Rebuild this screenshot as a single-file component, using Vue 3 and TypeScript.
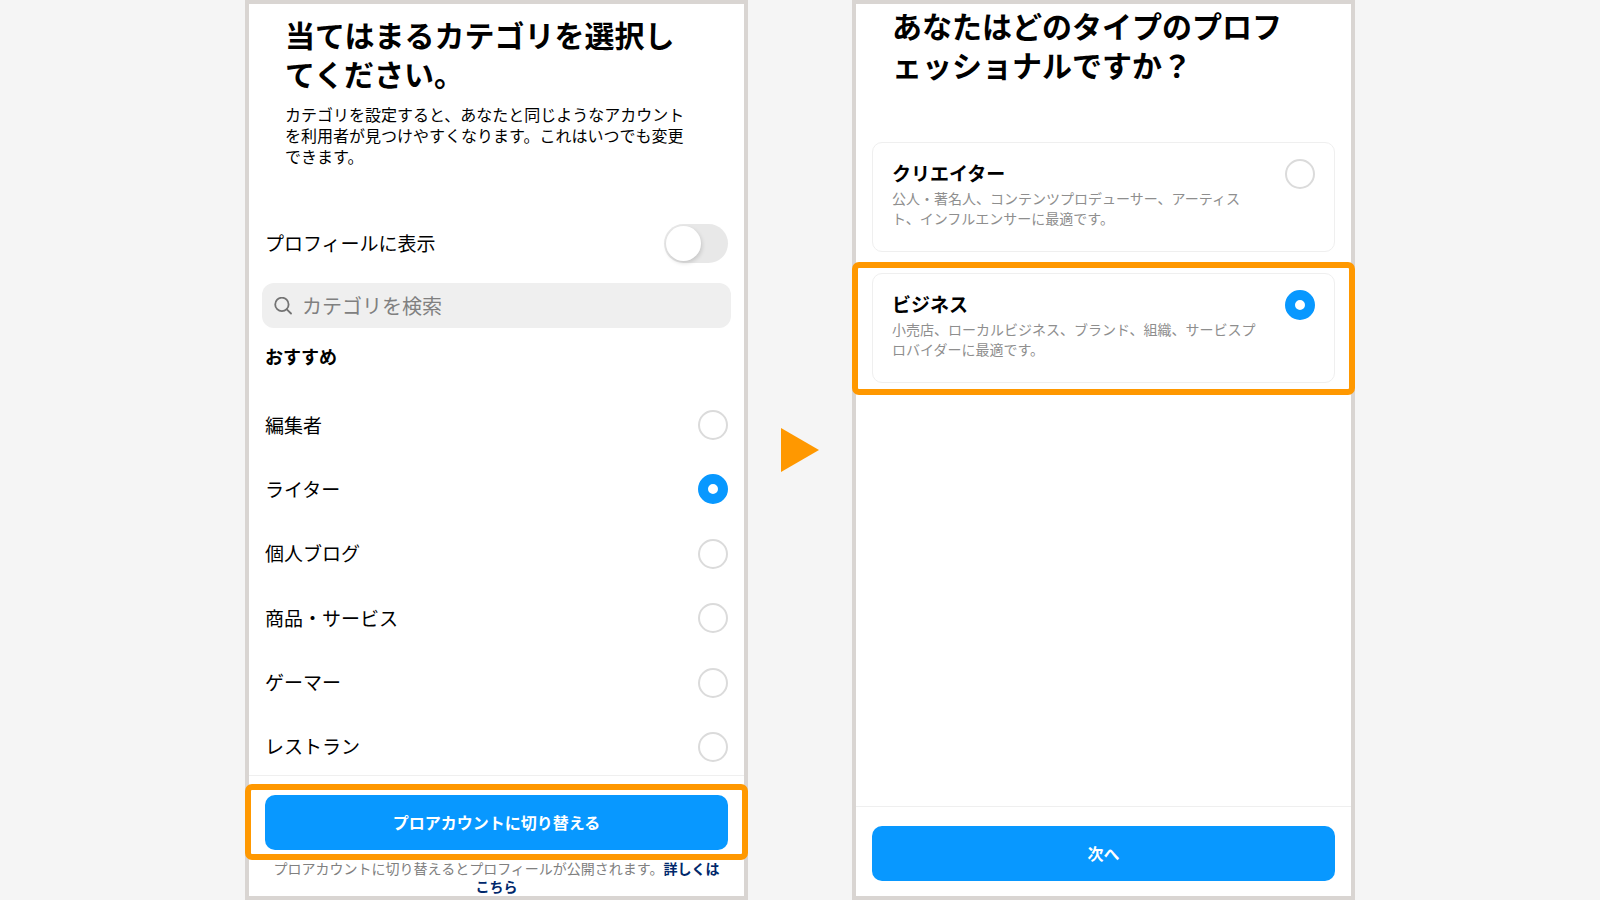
<script setup lang="ts">
import { ref } from 'vue'

interface AccountType {
  id: string
  title: string
  description: string
}

const categories: string[] = ['編集者', 'ライター', '個人ブログ', '商品・サービス', 'ゲーマー', 'レストラン']

const accountTypes: AccountType[] = [
  {
    id: 'creator',
    title: 'クリエイター',
    description: '公人・著名人、コンテンツプロデューサー、アーティスト、インフルエンサーに最適です。',
  },
  {
    id: 'business',
    title: 'ビジネス',
    description: '小売店、ローカルビジネス、ブランド、組織、サービスプロバイダーに最適です。',
  },
]

const showOnProfile = ref(false)
const query = ref('')
const category = ref('ライター')
const accountType = ref('business')
</script>

<template>
  <main class="stage" lang="ja">
    <section class="screen">
      <header class="intro intro-category">
        <h1>当てはまるカテゴリを選択してください。</h1>
        <p>カテゴリを設定すると、あなたと同じようなアカウントを利用者が見つけやすくなります。これはいつでも変更できます。</p>
      </header>

      <label class="row toggle-row">
        <span>プロフィールに表示</span>
        <input v-model="showOnProfile" class="switch" type="checkbox" role="switch" />
      </label>

      <div class="search">
        <svg viewBox="0 0 18 18" aria-hidden="true">
          <circle cx="7.9" cy="7.4" r="6.7" />
          <path d="M12.8 12.3 L17 16.5" />
        </svg>
        <input v-model="query" type="search" placeholder="カテゴリを検索" aria-label="カテゴリを検索" />
      </div>

      <h2 id="suggested">おすすめ</h2>
      <div class="categories" role="radiogroup" aria-labelledby="suggested">
        <label v-for="name in categories" :key="name" class="row">
          <span>{{ name }}</span>
          <input v-model="category" class="radio" type="radio" name="category" :value="name" />
        </label>
      </div>

      <footer class="actions actions-switch">
        <div class="highlight">
          <button class="primary" type="button">プロアカウントに切り替える</button>
        </div>
        <p>プロアカウントに切り替えるとプロフィールが公開されます。<a href="#">詳しくはこちら</a></p>
      </footer>
    </section>

    <svg class="arrow" viewBox="0 0 38 44" aria-hidden="true"><path d="M0 0 L38 22 L0 44 Z" /></svg>

    <section class="screen">
      <header class="intro intro-type">
        <h1 id="type-heading">あなたはどのタイプのプロフェッショナルですか？</h1>
      </header>

      <div class="cards" role="radiogroup" aria-labelledby="type-heading">
        <div v-for="type in accountTypes" :key="type.id" :class="{ highlight: accountType === type.id }">
          <label class="card">
            <span class="card-text">
              <strong>{{ type.title }}</strong>
              <span>{{ type.description }}</span>
            </span>
            <input v-model="accountType" class="radio" type="radio" name="account-type" :value="type.id" />
          </label>
        </div>
      </div>

      <footer class="actions actions-next">
        <button class="primary" type="button">次へ</button>
      </footer>
    </section>
  </main>
</template>

<style>
body {
  margin: 0;
  background: #f5f5f5;
}
</style>

<style scoped>
* {
  box-sizing: border-box;
}

.stage {
  display: grid;
  grid-template-columns: minmax(0, 1fr) 104px minmax(0, 1fr);
  max-width: 1110px;
  min-height: 100vh;
  margin: 0 auto;
  color: #000;
  font-family: 'Noto Sans CJK JP', sans-serif;
  line-break: loose;
}

.screen {
  display: flex;
  flex-direction: column;
  border: 4px solid #d9d5d2;
  background: #fff;
}

.arrow {
  place-self: center;
  width: 38px;
  height: 44px;
  fill: #ff9800;
}

h1,
h2,
p {
  margin: 0;
}

.intro {
  padding: 0 48px 0 36px;
}

.intro-category {
  padding-top: 11px;
}

.intro-type {
  padding-top: 2px;
}

h1 {
  font-size: 30px;
  font-weight: 700;
  line-height: 39px;
}

.intro p {
  margin-top: 11px;
  font-size: 16px;
  line-height: 21px;
}

.row {
  display: flex;
  align-items: center;
  justify-content: space-between;
  height: 30px;
  font-size: 19px;
}

.row span {
  padding-bottom: 2px;
}

.toggle-row {
  height: 40px;
  margin: 56px 16px 20px;
}

.switch {
  display: flex;
  align-items: center;
  appearance: none;
  width: 64px;
  height: 39px;
  margin: 0;
  padding: 2px;
  border-radius: 20px;
  background: #e8e8e8;
}

.switch::before {
  content: '';
  width: 35px;
  height: 35px;
  border-radius: 50%;
  background: #fff;
  box-shadow: 1px 2px 4px rgba(0, 0, 0, 0.15);
}

.switch:checked {
  justify-content: flex-end;
  background: #0898ff;
}

.search {
  display: flex;
  align-items: center;
  gap: 10px;
  height: 45px;
  margin: 0 13px;
  padding: 0 12px;
  border-radius: 12px;
  background: #efefef;
}

.search svg {
  flex: none;
  width: 18px;
  height: 18px;
  fill: none;
  stroke: #737373;
  stroke-width: 1.8;
  stroke-linecap: round;
}

.search input {
  flex: 1;
  min-width: 0;
  padding: 0;
  border: 0;
  outline: 0;
  background: none;
  color: #000;
  font: inherit;
  font-size: 20px;
}

.search input::placeholder {
  color: #808080;
}

h2 {
  margin: 13px 16px 0;
  font-size: 18px;
  font-weight: 700;
  line-height: 30px;
}

.categories {
  display: flex;
  flex: 1;
  flex-direction: column;
  justify-content: space-between;
  padding: 39px 16px 13px;
}

.radio {
  flex: none;
  appearance: none;
  width: 30px;
  height: 30px;
  margin: 0;
  border: 2px solid #dbdbdb;
  border-radius: 50%;
  background: #fff;
}

.radio:checked {
  border: 10px solid #0898ff;
}

.actions {
  border-top: 1px solid #efefef;
}

.actions-switch {
  padding: 19px 16px 1px;
}

.actions-next {
  margin-top: auto;
  padding: 19px 16px 15px;
}

.primary {
  display: block;
  width: 100%;
  height: 55px;
  padding: 0 0 2px;
  border: 0;
  border-radius: 10px;
  background: #0898ff;
  color: #fff;
  font: inherit;
  font-size: 16px;
  font-weight: 700;
}

.actions p {
  padding: 9px 4px 0;
  color: #808080;
  font-size: 14px;
  line-height: 18px;
  text-align: center;
}

.actions a {
  color: #00286b;
  font-weight: 700;
  text-decoration: none;
}

/* Orange frame around the control the reader should tap. */
.highlight {
  position: relative;
}

.highlight::after {
  content: '';
  position: absolute;
  inset: -11px -20px -12px;
  border: 6px solid #ff9800;
  border-radius: 7px;
  pointer-events: none;
}

.actions .highlight::after {
  bottom: -10px;
}

.cards {
  display: flex;
  flex-direction: column;
  gap: 21px;
  padding: 58px 16px 0;
}

.card {
  display: flex;
  align-items: flex-start;
  justify-content: space-between;
  padding: 16px 19px 23px;
  border: 1px solid #efefef;
  border-radius: 10px;
}

.card-text {
  display: flex;
  flex-direction: column;
  gap: 1px;
  max-width: 370px;
}

.card strong {
  font-size: 19px;
  line-height: 28px;
}

.card-text span {
  color: #8e8e8e;
  font-size: 14px;
  line-height: 20px;
}
</style>
